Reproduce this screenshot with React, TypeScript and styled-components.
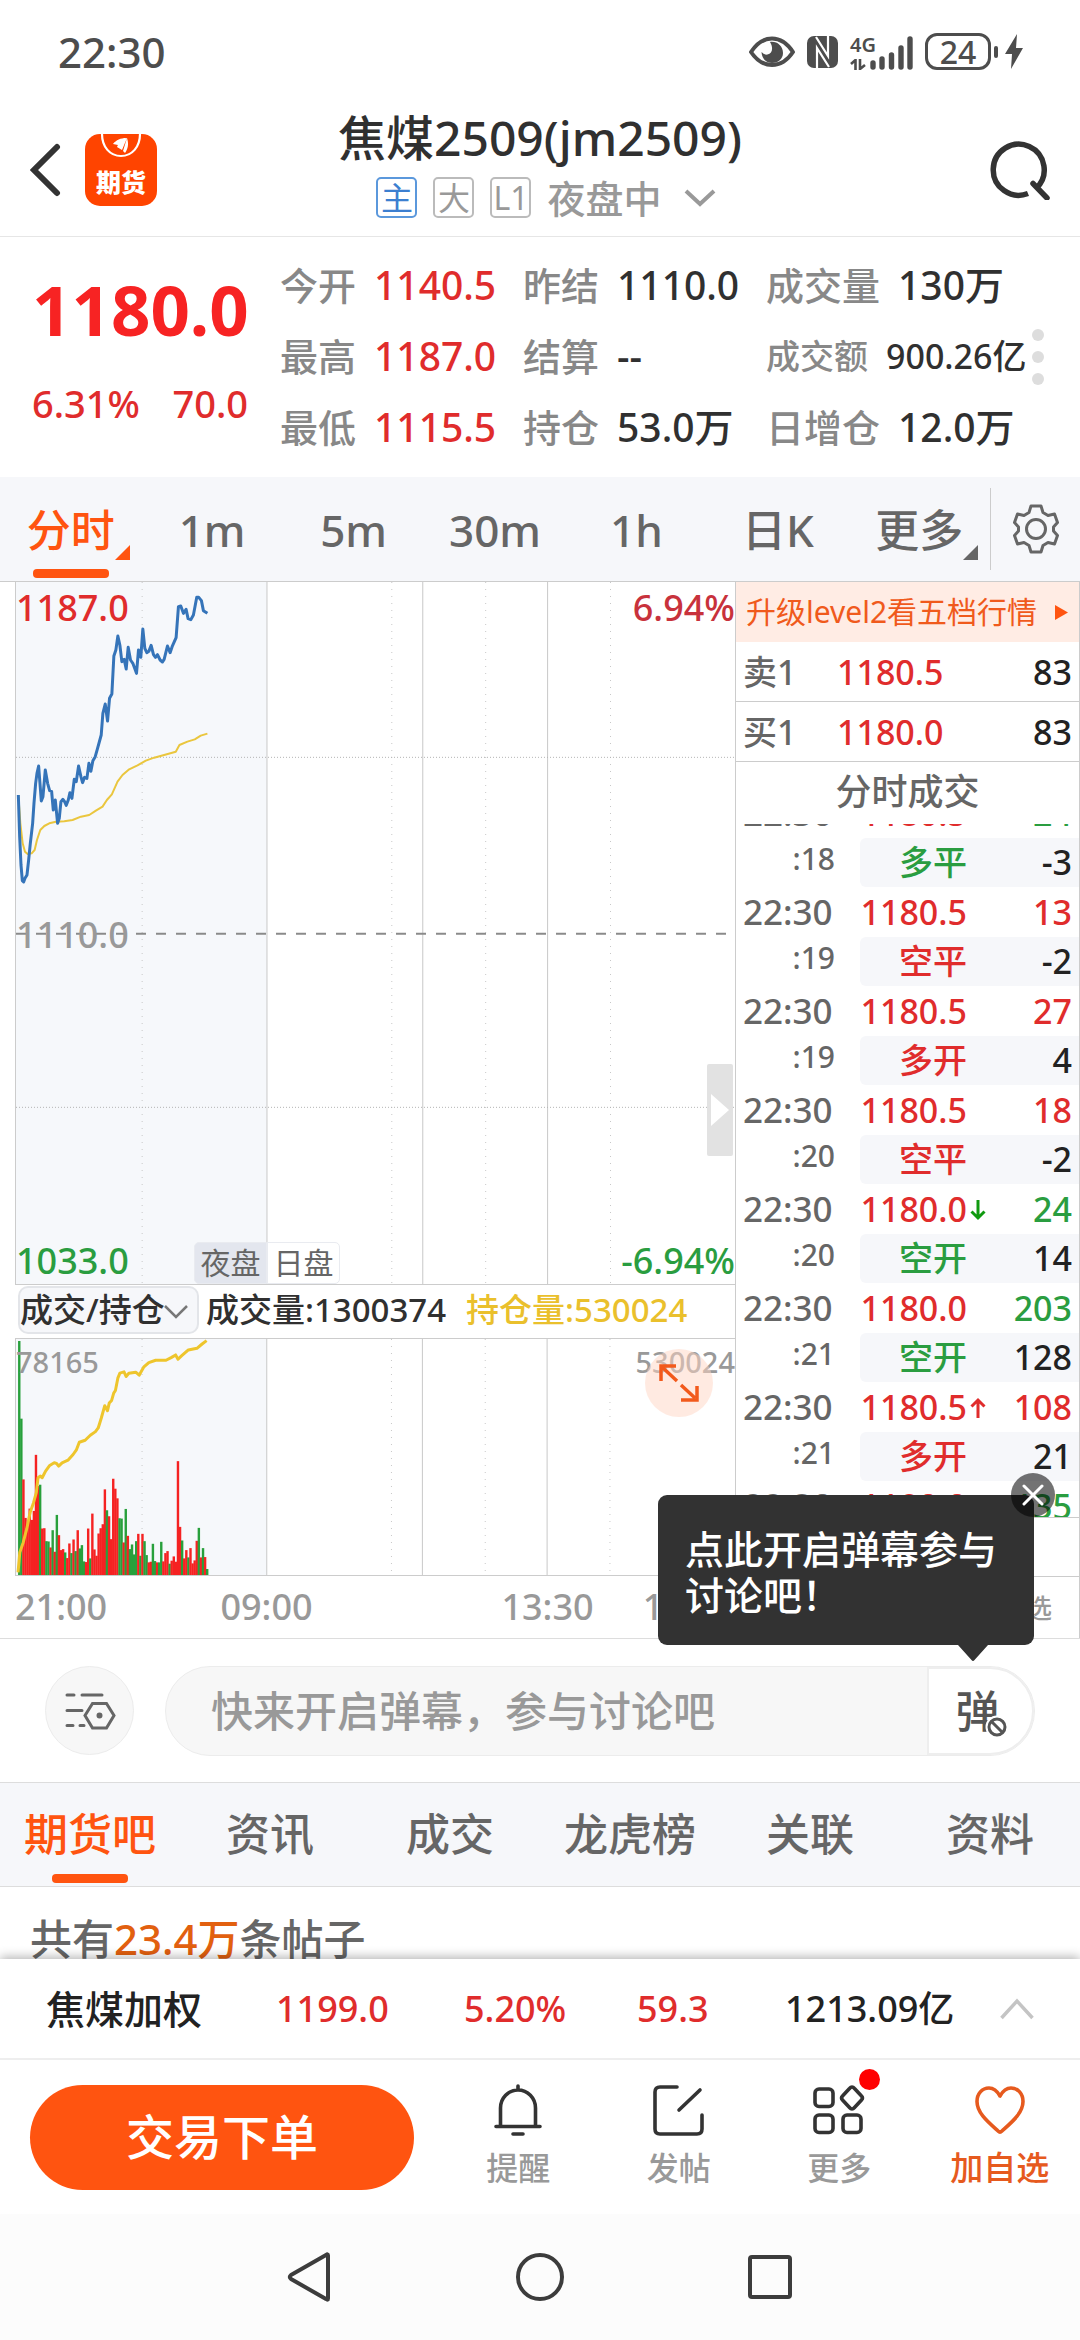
import React from "react";
import styled, { createGlobalStyle } from "styled-components";

const color = {
  ink: "#303030",
  text: "#666666",
  label: "#888888",
  muted: "#999999",
  red: "#e02c2c",
  green: "#2a9d40",
  orange: "#ff5410",
  yellow: "#eac02c",
  blue: "#3574b9",
  line: "#cccccc",
  panel: "#f6f7fa",
};

const Global = createGlobalStyle`
  *, *::before, *::after { box-sizing: border-box; }
  html, body { margin: 0; padding: 0; background: #fff; }
  body { font-family: "Noto Sans", "Noto Sans CJK SC", sans-serif; font-weight: 500; color: ${color.ink}; }
  button, input, select { font: inherit; color: inherit; border: 0; background: none; padding: 0; margin: 0; outline: 0; }
  button { cursor: pointer; }
  svg { display: block; }
  ul, dl, dd, h1, p { margin: 0; padding: 0; font-weight: 500; }
  ul { list-style: none; }
  a { color: inherit; text-decoration: none; }
`;

const Screen = styled.div`
  display: flex;
  flex-direction: column;
  width: 100%;
  height: 100vh;
  min-height: 2200px;
  overflow: hidden;
`;

/* ---------- status bar ---------- */

const StatusBar = styled.div`
  display: flex;
  justify-content: space-between;
  align-items: center;
  height: 103px;
  padding: 0 57px 0 58px;
  color: #4d4d4d;
`;

const Clock = styled.time`
  font-size: 42px;
  line-height: 50px;
`;

const StatusIcons = styled.div`
  display: flex;
  align-items: center;
  gap: 12px;
`;

const Signal = styled.div`
  display: flex;
  align-items: flex-end;
  gap: 4px;
  height: 36px;
`;

const Network = styled.div`
  display: flex;
  flex-direction: column;
  align-items: flex-start;
  justify-content: space-between;
  height: 36px;
  font-size: 20px;
  line-height: 22px;
  font-weight: 600;
`;

const SignalBars = styled.svg`
  margin-left: -10px;
`;

const Battery = styled.div`
  display: flex;
  align-items: center;
  gap: 3px;
`;

const BatteryBody = styled.span`
  width: 66px;
  height: 37px;
  border: 3px solid currentColor;
  border-radius: 12px;
  font-size: 32px;
  line-height: 31px;
  font-weight: 500;
  text-align: center;
`;

const BatteryTip = styled.span`
  width: 4px;
  height: 12px;
  margin-right: 4px;
  border-radius: 2px;
  background: currentColor;
`;

/* ---------- header ---------- */

const Header = styled.header`
  display: grid;
  grid-template-columns: 1fr auto 1fr;
  align-items: center;
  height: 134px;
  border-bottom: 1px solid #e6e6e6;
`;

const HeaderSide = styled.div<{ $end?: boolean }>`
  display: flex;
  align-items: center;
  justify-content: ${(p) => (p.$end ? "flex-end" : "flex-start")};
  gap: 24px;
  padding: 0 30px;
`;

const AppBadge = styled.a`
  position: relative;
  display: flex;
  align-items: flex-end;
  justify-content: center;
  width: 72px;
  height: 72px;
  padding-bottom: 8px;
  border-radius: 15px;
  overflow: hidden;
  background: #ff4400;
  color: #fff;
  font-size: 25px;
  line-height: 32px;
  font-weight: 800;
`;

const BadgeArt = styled.svg`
  position: absolute;
  top: 0;
  left: 15px;
`;

const TitleBlock = styled.div`
  display: flex;
  flex-direction: column;
  align-items: center;
  gap: 10px;
  padding-bottom: 12px;
`;

const Title = styled.h1`
  font-size: 48px;
  line-height: 58px;
  color: #303030;
`;

const TitleMeta = styled.button`
  display: flex;
  align-items: center;
  gap: 16px;
  padding-left: 12px;
  color: ${color.muted};
  font-size: 38px;
  line-height: 42px;
`;

const Chip = styled.span<{ $active?: boolean }>`
  width: 41px;
  height: 41px;
  border: 2px solid ${(p) => (p.$active ? "#5b98dc" : "#bbbbbb")};
  border-radius: 5px;
  color: ${(p) => (p.$active ? "#3c7fd0" : color.muted)};
  font-size: 32px;
  font-weight: 400;
  line-height: 37px;
  text-align: center;
`;

const MetaChevron = styled.svg`
  margin-left: 6px;
`;

/* ---------- quote ---------- */

const Quote = styled.section`
  position: relative;
  display: flex;
  padding: 12px 0 15px;
`;

const Last = styled.div`
  display: flex;
  flex-direction: column;
  width: 280px;
  padding: 12px 30px 0 32px;
  color: ${color.red};
`;

const LastPrice = styled.strong`
  font-size: 69px;
  line-height: 96px;
  font-weight: 700;
  color: #f72323;
`;

const LastChange = styled.div`
  display: flex;
  justify-content: space-between;
  padding: 22px 2px 0 0;
  font-size: 38px;
  line-height: 48px;
`;

const Stats = styled.dl`
  flex: 1;
  display: grid;
  grid-template-columns: 243fr 243fr 314fr;
  grid-auto-rows: 71px;
`;

const Stat = styled.div<{ $small?: boolean }>`
  display: flex;
  align-items: center;
  gap: 18px;
  font-size: ${(p) => (p.$small ? 34 : 38)}px;
  line-height: 48px;
  white-space: nowrap;
`;

const StatLabel = styled.dt`
  color: ${color.label};
`;

const StatValue = styled.dd<{ $up?: boolean; $small?: boolean }>`
  color: ${(p) => (p.$up ? color.red : color.ink)};
  font-size: ${(p) => (p.$small ? 34 : 39)}px;
`;

const PageDots = styled.div`
  position: absolute;
  top: 92px;
  right: 36px;
  display: flex;
  flex-direction: column;
  gap: 10px;
`;

const PageDot = styled.i`
  width: 12px;
  height: 12px;
  border-radius: 50%;
  background: #dddddd;
`;

/* ---------- period tabs ---------- */

const PeriodBar = styled.nav`
  display: flex;
  align-items: center;
  height: 105px;
  border-bottom: 1px solid ${color.line};
  background: ${color.panel};
`;

const Periods = styled.div`
  flex: 1;
  display: grid;
  grid-template-columns: repeat(7, 1fr);
`;

const Period = styled.button<{ $active?: boolean }>`
  position: relative;
  height: 104px;
  padding-top: 2px;
  color: ${(p) => (p.$active ? color.orange : color.text)};
  font-size: 44px;
  line-height: 102px;
`;

const Corner = styled.svg`
  position: absolute;
  left: calc(50% + 44px);
  top: 68px;
`;

const Underline = styled.i`
  position: absolute;
  left: calc(50% - 38px);
  bottom: 3px;
  width: 76px;
  height: 9px;
  border-radius: 4px;
  background: ${color.orange};
`;

const Settings = styled.button`
  display: flex;
  align-items: center;
  justify-content: center;
  width: 90px;
  height: 82px;
  border-left: 1px solid ${color.line};
  color: ${color.text};
`;

/* ---------- charts ---------- */

const Market = styled.section`
  display: flex;
  border-bottom: 1px solid #dddddd;
`;

const ChartColumn = styled.div`
  flex: 1;
  min-width: 0;
  padding-left: 15px;
`;

const Plot = styled.div<{ $h: number }>`
  position: relative;
  height: ${(p) => p.$h}px;
  border-left: 1px solid ${color.line};
  border-bottom: 1px solid ${color.line};
`;

const PlotSvg = styled.svg`
  width: 100%;
  height: 100%;
`;

const PlotLabel = styled.span<{ $top: number; $right?: boolean; $tone: string; $size?: number }>`
  position: absolute;
  top: ${(p) => p.$top}px;
  ${(p) => (p.$right ? "right: 0;" : "left: 0;")}
  color: ${(p) => p.$tone};
  font-size: ${(p) => p.$size ?? 36}px;
  line-height: 44px;
`;

const Sessions = styled.div`
  position: absolute;
  left: 178px;
  bottom: 0;
  display: flex;
`;

const Session = styled.button<{ $active?: boolean }>`
  width: 73px;
  height: 42px;
  border: 1px solid #e9ebf0;
  border-radius: ${(p) => (p.$active ? "5px 0 0 5px" : "0 5px 5px 0")};
  background: ${(p) => (p.$active ? "#e3e6ee" : "#ffffff")};
  color: ${color.text};
  font-size: 30px;
  font-weight: 400;
  line-height: 38px;
`;

const Handle = styled.button`
  position: absolute;
  right: 2px;
  top: 482px;
  display: flex;
  align-items: center;
  justify-content: center;
  width: 26px;
  height: 92px;
  border-radius: 2px;
  background: #e2e2e2;
`;

const Expand = styled.button`
  position: absolute;
  right: 22px;
  top: 10px;
  display: flex;
  align-items: center;
  justify-content: center;
  width: 68px;
  height: 68px;
  border-radius: 50%;
  background: rgba(255, 214, 196, 0.5);
`;

const IndicatorBar = styled.div`
  display: flex;
  align-items: center;
  height: 54px;
  padding: 0 0 4px 3px;
  border-bottom: 1px solid ${color.line};
  font-size: 33px;
  line-height: 44px;
  white-space: nowrap;
`;

const IndicatorPicker = styled.label`
  position: relative;
  display: flex;
  align-items: center;
  width: 181px;
  height: 48px;
  border: 2px solid #e3e5e9;
  border-radius: 10px;
  background: ${color.panel};
`;

const IndicatorSelect = styled.select`
  appearance: none;
  width: 100%;
  height: 44px;
  font-size: 33px;
  line-height: 44px;
`;

const PickerChevron = styled.svg`
  position: absolute;
  right: 9px;
  top: 16px;
  pointer-events: none;
`;

const Reading = styled.span<{ $tone?: string; $gap: number }>`
  margin-left: ${(p) => p.$gap}px;
  color: ${(p) => p.$tone ?? color.ink};
`;

const Axis = styled.div`
  display: grid;
  grid-template-columns: 161fr 181fr 101fr 179fr 98fr;
  align-items: center;
  height: 62px;
  color: ${color.muted};
  font-size: 36px;
  line-height: 44px;
`;

const Tick = styled.span<{ $col: number; $align: string }>`
  grid-column: ${(p) => p.$col};
  text-align: ${(p) => p.$align};
`;

/* ---------- order book and trades ---------- */

const Book = styled.aside`
  display: flex;
  flex-direction: column;
  width: 345px;
  border-left: 1px solid ${color.line};
  border-right: 1px solid ${color.line};
`;

const Upgrade = styled.a`
  display: flex;
  align-items: center;
  justify-content: space-between;
  height: 60px;
  padding: 0 11px 0 10px;
  background: #ffece4;
  color: #f05a1c;
  font-size: 30px;
  font-weight: 400;
  line-height: 40px;
  white-space: nowrap;
`;

const BookRow = styled.div`
  display: grid;
  grid-template-columns: 94px 1fr auto;
  align-items: center;
  height: 60px;
  padding: 0 7px;
  border-bottom: 1px solid ${color.line};
  color: #222222;
  font-size: 34px;
  line-height: 44px;
`;

const Side = styled.span`
  color: ${color.text};
`;

const BookPrice = styled.span`
  color: ${color.red};
`;

const TradesTitle = styled.p`
  height: 62px;
  color: ${color.text};
  font-size: 36px;
  line-height: 60px;
  text-align: center;
`;

const TradesWindow = styled.div`
  height: 694px;
  overflow: hidden;
  border-bottom: 1px solid ${color.line};
`;

const TradesTable = styled.table`
  width: 100%;
  margin-top: -36px;
  table-layout: fixed;
  border-collapse: separate;
  border-spacing: 0;
  font-size: 34px;
`;

const Cell = styled.td<{ $tone?: string; $h?: number; $fill?: "start" | "end" }>`
  height: ${(p) => p.$h ?? 50}px;
  padding: 0 7px 0 0;
  line-height: ${(p) => p.$h ?? 50}px;
  color: ${(p) => p.$tone ?? "#222222"};
  background: ${(p) => (p.$fill ? color.panel : "transparent")};
  border-radius: ${(p) => (p.$fill === "start" ? "6px 0 0 6px" : "0")};
  text-align: right;
  white-space: nowrap;
`;

const TimeCell = styled(Cell)`
  padding: 0 0 0 7px;
  font-size: 35px;
  text-align: left;
`;

const SecondCell = styled(Cell)`
  padding: 0 25px 7px 0;
  font-size: 30px;
  line-height: 42px;
`;

const PriceCell = styled(Cell)`
  padding: 0 21px 0 0;
`;

const Arrow = styled.svg`
  display: inline-block;
  margin: 0 -19px 0 3px;
  vertical-align: 1px;
`;

const BookFoot = styled.div`
  height: 59px;
  border-bottom: 1px solid ${color.line};
`;

const BookTab = styled.button`
  height: 61px;
  padding-right: 27px;
  color: ${color.muted};
  font-size: 26px;
  line-height: 60px;
  text-align: right;
`;

/* ---------- comment bar ---------- */

const CommentBar = styled.form`
  position: relative;
  display: flex;
  align-items: center;
  gap: 31px;
  height: 143px;
  padding: 0 45px;
`;

const RoundButton = styled.button`
  display: flex;
  align-items: center;
  justify-content: center;
  width: 89px;
  height: 89px;
  border: 1px solid #ececec;
  border-radius: 50%;
  background: #f7f7f7;
`;

const Capsule = styled.div`
  flex: 1;
  display: flex;
  height: 90px;
  border: 1px solid #ececec;
  border-radius: 45px;
  overflow: hidden;
  background: #f7f7f7;
`;

const CommentInput = styled.input`
  flex: 1;
  min-width: 0;
  padding-left: 45px;
  font-size: 42px;
  line-height: 60px;
  &::placeholder { color: ${color.muted}; opacity: 1; }
`;

const DanmuToggle = styled.button`
  position: relative;
  width: 107px;
  padding-right: 6px;
  border: 2px solid #eeeeee;
  border-radius: 0 45px 45px 0;
  background: #fff;
  color: #555555;
  font-size: 44px;
  line-height: 84px;
  font-weight: 500;
`;

const BanMark = styled.svg`
  position: absolute;
  left: 56px;
  top: 46px;
`;

const Tip = styled.div`
  position: absolute;
  right: 46px;
  bottom: calc(100% - 6px);
  z-index: 3;
  width: 376px;
  padding: 31px 27px 27px;
  border-radius: 9px;
  background: #323232;
  color: #fff;
  font-size: 39px;
  line-height: 46px;
`;

const TipPointer = styled.svg`
  position: absolute;
  left: 300px;
  top: 100%;
`;

const TipClose = styled.button`
  position: absolute;
  top: -22px;
  right: -21px;
  display: flex;
  align-items: center;
  justify-content: center;
  width: 44px;
  height: 44px;
  border-radius: 50%;
  background: rgba(0, 0, 0, 0.55);
`;

/* ---------- forum ---------- */

const ForumTabs = styled.nav`
  display: grid;
  grid-template-columns: repeat(6, 1fr);
  height: 105px;
  border-top: 1px solid #dddddd;
  border-bottom: 1px solid #dddddd;
  background: ${color.panel};
`;

const ForumTab = styled.button<{ $active?: boolean }>`
  position: relative;
  color: ${(p) => (p.$active ? color.orange : color.text)};
  font-size: 44px;
  line-height: 103px;
`;

const Posts = styled.main`
  flex: 1;
  min-height: 60px;
  padding: 22px 30px 0;
  overflow: hidden;
  color: ${color.text};
  font-size: 42px;
  line-height: 60px;
  white-space: nowrap;
`;

const Count = styled.span`
  color: #e2600f;
`;

/* ---------- bottom ---------- */

const IndexBar = styled.button`
  position: relative;
  display: grid;
  grid-template-columns: 230fr 188fr 173fr 148fr 215fr 34fr;
  align-items: center;
  height: 101px;
  flex-shrink: 0;
  padding: 0 46px 0 46px;
  border-bottom: 2px solid #eeeeee;
  background: #fff;
  box-shadow: 0 -2px 10px rgba(0, 0, 0, 0.3);
  color: #222222;
  font-size: 36px;
  line-height: 50px;
  text-align: left;
  white-space: nowrap;
`;

const IndexName = styled.span`
  font-size: 39px;
`;

const IndexValue = styled.span`
  color: ${color.red};
`;

const ActionBar = styled.div`
  position: relative;
  display: flex;
  align-items: center;
  height: 154px;
  flex-shrink: 0;
  padding-left: 30px;
  background: #fff;
`;

const TradeButton = styled.button`
  width: 384px;
  height: 105px;
  margin-right: 24px;
  border-radius: 53px;
  background: ${color.orange};
  color: #fff;
  font-size: 48px;
  line-height: 102px;
  font-weight: 500;
`;

const Action = styled.button<{ $hot?: boolean }>`
  position: relative;
  flex: 1;
  display: flex;
  flex-direction: column;
  align-items: center;
  gap: 10px;
  color: ${(p) => (p.$hot ? "#e65a1e" : color.muted)};
  font-size: ${(p) => (p.$hot ? 33 : 32)}px;
  line-height: 44px;
`;

const RedDot = styled.i`
  position: absolute;
  left: calc(50% + 20px);
  top: -15px;
  width: 21px;
  height: 21px;
  border-radius: 50%;
  background: #ff0000;
`;

const SystemNav = styled.nav`
  display: flex;
  align-items: center;
  justify-content: center;
  gap: 182px;
  height: 126px;
  flex-shrink: 0;
  background: #fcfcfc;
`;

/* ---------- data ---------- */

const stats = [
  { label: "今开", value: "1140.5", up: true },
  { label: "昨结", value: "1110.0" },
  { label: "成交量", value: "130万" },
  { label: "最高", value: "1187.0", up: true },
  { label: "结算", value: "--" },
  { label: "成交额", value: "900.26亿", small: true },
  { label: "最低", value: "1115.5", up: true },
  { label: "持仓", value: "53.0万" },
  { label: "日增仓", value: "12.0万" },
];

const periods = ["分时", "1m", "5m", "30m", "1h", "日K", "更多"];
const forumTabs = ["期货吧", "资讯", "成交", "龙虎榜", "关联", "资料"];

type Trade = {
  price: string;
  qty: string;
  up: boolean;
  move?: "up" | "down";
  sec?: string;
  kind?: string;
  kindUp?: boolean;
  delta?: string;
};

const trades: Trade[] = [
  { price: "1180.5", qty: "24", up: false, sec: ":18", kind: "多平", kindUp: false, delta: "-3" },
  { price: "1180.5", qty: "13", up: true, sec: ":19", kind: "空平", kindUp: true, delta: "-2" },
  { price: "1180.5", qty: "27", up: true, sec: ":19", kind: "多开", kindUp: true, delta: "4" },
  { price: "1180.5", qty: "18", up: true, sec: ":20", kind: "空平", kindUp: true, delta: "-2" },
  { price: "1180.0", qty: "24", up: false, move: "down", sec: ":20", kind: "空开", kindUp: false, delta: "14" },
  { price: "1180.0", qty: "203", up: false, sec: ":21", kind: "空开", kindUp: false, delta: "128" },
  { price: "1180.5", qty: "108", up: true, move: "up", sec: ":21", kind: "多开", kindUp: true, delta: "21" },
  { price: "1180.0", qty: "135", up: false, move: "down" },
];

const priceLine =
  "52,675 56,800 60,885 64,932 68,936 72,925 78,915 83,870 88,820 95,760 99,700 104,640 108,610 113,588 117,640 121,693 126,680 133,600 140,640 146,662 152,664 157,720 163,690 170,760 175,745 180,695 186,688 191,695 196,706 202,690 207,668 213,685 220,628 226,635 233,588 240,620 245,638 251,622 258,625 264,580 270,604 276,572 283,560 290,535 301,495 306,430 313,402 320,453 326,385 333,372 339,258 345,240 351,198 357,225 363,275 370,268 376,297 382,232 389,270 396,280 407,310 413,240 420,262 426,177 432,235 438,248 444,244 451,226 458,254 464,262 470,254 478,270 485,276 490,268 500,228 508,248 514,230 526,203 533,110 540,108 548,130 556,118 562,146 570,149 578,135 588,82 594,82 602,92 608,122 620,130";

const averageLine =
  "52,675 58,760 65,820 72,845 80,852 92,850 101,840 108,810 118,780 130,768 145,760 165,755 190,754 215,750 240,740 265,735 285,722 305,710 318,690 333,673 350,635 365,615 385,598 410,586 435,572 460,563 490,555 525,545 536,525 560,515 582,508 600,497 620,491";

const openInterest =
  "50,1030 55,970 65,940 75,900 85,850 95,820 103,790 108,745 115,740 120,745 130,725 142,708 155,700 162,702 168,710 178,700 195,692 210,675 220,660 228,638 245,632 260,617 275,606 283,595 292,565 302,528 310,543 315,520 322,512 328,490 333,482 340,445 346,430 358,426 364,440 372,430 392,427 402,436 415,412 430,398 450,391 480,391 495,383 508,375 515,388 525,378 545,360 570,355 585,342 598,332";

const volumes =
  "g333 g567 r750 r866 r890 r838 r872 r845 r676 r770 g766 r898 r897 g936 g937 r955 g903 r968 g857 r918 r963 r960 g970 r987 r943 g972 r931 g966 r903 g958 g948 g997 r999 r898 g988 r853 r961 r980 r913 r897 r885 r780 g843 r861 r930 r748 r778 r807 g867 g868 r940 g839 r920 g960 g946 g976 g936 r914 g980 r914 g936 g978 r1000 r998 g944 g996 r1000 g1000 g938 r997 r972 r966 g1004 r995 r982 r998 r695 r893 g934 r988 r963 g985 r957 r1003 r994 r935 g896 r985 g957 r984 g1020".split(" ");

const solidX = [251, 407, 532];
const dottedX = [126, 376, 470, 595];

function Verticals({ unitX, originX, top, bottom }: { unitX: number; originX: number; top: number; bottom: number }) {
  return (
    <g stroke="#c8c8c8" strokeWidth="1">
      {solidX.map((x) => (
        <line key={x} x1={originX + x * unitX} x2={originX + x * unitX} y1={top} y2={bottom} vectorEffect="non-scaling-stroke" />
      ))}
      {dottedX.map((x) => (
        <line key={x} x1={originX + x * unitX} x2={originX + x * unitX} y1={top} y2={bottom} strokeDasharray="1 6" vectorEffect="non-scaling-stroke" />
      ))}
    </g>
  );
}

function PriceChart() {
  return (
    <PlotSvg viewBox="45 36 2160 2106" preserveAspectRatio="none" fill="none" role="img" aria-label="分时走势">
      <rect x="45" y="36" width="754" height="2106" fill="#f6f8fb" />
      <Verticals unitX={3} originX={46} top={36} bottom={2142} />
      <g stroke="#b4b4b4" strokeWidth="1" strokeDasharray="1 2">
        <line x1="45" x2="2205" y1="562" y2="562" vectorEffect="non-scaling-stroke" />
        <line x1="45" x2="2205" y1="1612" y2="1612" vectorEffect="non-scaling-stroke" />
      </g>
      <line x1="45" x2="2180" y1="1091" y2="1091" stroke="#8a8a8a" strokeWidth="2" strokeDasharray="10 10" vectorEffect="non-scaling-stroke" />
      <polyline points={averageLine} stroke="#eac63e" strokeWidth="2" strokeLinejoin="round" vectorEffect="non-scaling-stroke" />
      <polyline points={priceLine} stroke={color.blue} strokeWidth="3" strokeLinejoin="round" vectorEffect="non-scaling-stroke" />
    </PlotSvg>
  );
}

function VolumeChart() {
  return (
    <PlotSvg viewBox="44 327 2090 711" preserveAspectRatio="none" fill="none" role="img" aria-label="成交量与持仓量">
      <rect x="44" y="327" width="729" height="711" fill="#f6f8fb" />
      <Verticals unitX={2.9} originX={45} top={327} bottom={1038} />
      {volumes.map((v, i) => {
        const y = Number(v.slice(1));
        return <rect key={i} x={50 + i * 6.07} y={y} width="7" height={1038 - y} fill={v[0] === "g" ? "#28a03c" : "#f52222"} />;
      })}
      <polyline points={openInterest} stroke="#eec52c" strokeWidth="3" strokeLinejoin="round" vectorEffect="non-scaling-stroke" />
    </PlotSvg>
  );
}

function MoveArrow({ dir }: { dir: "up" | "down" }) {
  return (
    <Arrow width="16" height="22" viewBox="0 0 16 22" fill="none" stroke={dir === "up" ? color.red : "#109a10"} strokeWidth="3">
      {dir === "up" ? <path d="M8 21V3M1.500 9.500L8 3l6.500 6.500" /> : <path d="M8 1v18M1.500 12.500L8 19l6.500-6.500" />}
    </Arrow>
  );
}

function TradeRows({ t }: { t: Trade }) {
  return (
    <>
      <tr>
        <TimeCell $tone={color.text}>22:30</TimeCell>
        <PriceCell $tone={color.red}>
          {t.price}
          {t.move && <MoveArrow dir={t.move} />}
        </PriceCell>
        <Cell $tone={t.up ? color.red : color.green}>{t.qty}</Cell>
      </tr>
      {t.kind && (
        <tr>
          <SecondCell $tone={color.text} $h={49}>{t.sec}</SecondCell>
          <PriceCell $h={49} $fill="start" $tone={t.kindUp ? color.red : color.green}>{t.kind}</PriceCell>
          <Cell $h={49} $fill="end">{t.delta}</Cell>
        </tr>
      )}
    </>
  );
}

export default function App() {
  return (
    <Screen>
      <Global />
      <StatusBar>
        <Clock>22:30</Clock>
        <StatusIcons>
          <svg width="46" height="32" viewBox="0 0 46 32" fill="none">
            <path d="M2 16C8 7 15 2.500 23 2.500S38 7 44 16C38 25 31 29 23 29S8 25 2 16Z" stroke="#4d4d4d" strokeWidth="4" strokeLinejoin="round" />
            <path d="M21 6c7-1 13 4 13 11 0 6-5 10-11 10-6 0-10-4-10.500-11 2 2 4 3 6 2.500 5-1 6-7 2.500-12.500Z" fill="#4d4d4d" />
          </svg>
          <svg width="31" height="32" viewBox="0 0 31 32">
            <rect width="31" height="32" rx="7" fill="#4d4d4d" />
            <path d="M10 32V12L22 31M21 0V20L9 1" fill="none" stroke="#fff" strokeWidth="2.200" />
          </svg>
          <Signal>
            <Network>
              4G
              <svg width="16" height="11" viewBox="0 0 16 11" fill="none" stroke="#4d4d4d" strokeWidth="2.600">
                <path d="M5.500 11V1L1 5M10 0v10l5-4" />
              </svg>
            </Network>
            <SignalBars width="43" height="34" viewBox="0 0 43 34" stroke="#4d4d4d" strokeWidth="5.400" strokeLinecap="round">
              <path d="M3 27v4M12 23v8M21.500 19v12M31 12v19M40 3v28" />
            </SignalBars>
          </Signal>
          <Battery>
            <BatteryBody>24</BatteryBody>
            <BatteryTip />
            <svg width="18" height="35" viewBox="0 0 18 35" fill="#4d4d4d">
              <path d="M12 0L0 20h7L6 35 18 14h-7Z" />
            </svg>
          </Battery>
        </StatusIcons>
      </StatusBar>

      <Header>
        <HeaderSide>
          <button aria-label="返回">
            <svg width="31" height="54" viewBox="0 0 31 54" fill="none" stroke="#333" strokeWidth="6" strokeLinecap="round">
              <path d="M27 4L4 27 27 50" />
            </svg>
          </button>
          <AppBadge href="#">
            <BadgeArt width="42" height="26" viewBox="0 0 42 26" fill="none">
              <path d="M2 0c0 13 8 22 19 22S40 13 40 0" stroke="#fff" strokeWidth="2.200" />
              <path d="M13 10c3-4 8-6 13-6l-8 7M17 13c2-5 6-8 10-9l-5 12M23 17l4-13c2 6 1 11-2 15Z" fill="#fff" />
            </BadgeArt>
            期货
          </AppBadge>
        </HeaderSide>
        <TitleBlock>
          <Title>焦煤2509(jm2509)</Title>
          <TitleMeta>
            <Chip $active>主</Chip>
            <Chip>大</Chip>
            <Chip>L1</Chip>
            夜盘中
            <MetaChevron width="32" height="20" viewBox="0 0 32 20" fill="none" stroke="#999" strokeWidth="4">
              <path d="M2 3l14 13L30 3" />
            </MetaChevron>
          </TitleMeta>
        </TitleBlock>
        <HeaderSide $end>
          <button aria-label="搜索">
            <svg width="60" height="60" viewBox="0 0 60 60" fill="none" stroke="#333" strokeWidth="5.500">
              <path d="M38 53.500A25.500 25.500 0 1 1 46 48.500" />
              <path d="M43 43.500L57 58" strokeLinecap="round" />
            </svg>
          </button>
        </HeaderSide>
      </Header>

      <Quote>
        <Last>
          <LastPrice>1180.0</LastPrice>
          <LastChange>
            <span>6.31%</span>
            <span>70.0</span>
          </LastChange>
        </Last>
        <Stats>
          {stats.map((s) => (
            <Stat key={s.label} $small={s.small}>
              <StatLabel>{s.label}</StatLabel>
              <StatValue $up={s.up} $small={s.small}>{s.value}</StatValue>
            </Stat>
          ))}
        </Stats>
        <PageDots>
          <PageDot />
          <PageDot />
          <PageDot />
        </PageDots>
      </Quote>

      <PeriodBar>
        <Periods>
          {periods.map((p, i) => (
            <Period key={p} $active={i === 0}>
              {p}
              {(i === 0 || i === 6) && (
                <Corner width="15" height="15" viewBox="0 0 15 15" fill="currentColor">
                  <path d="M15 0v15H0Z" />
                </Corner>
              )}
              {i === 0 && <Underline />}
            </Period>
          ))}
        </Periods>
        <Settings aria-label="设置">
          <svg width="46" height="50" viewBox="0 0 46 50" fill="none" stroke="currentColor" strokeWidth="3" strokeLinejoin="round">
            <path d="M18 2h10l2 6.500 5 3L41.500 10l3 8.500-4 4.500v4l4 4.500-3 8.500-6.500-1.500-5 3L28 48H18l-2-6.500-5-3L4.500 40l-3-8.500 4-4.500v-4l-4-4.500 3-8.500L11 11.500l5-3Z" />
            <circle cx="23" cy="25" r="9.500" />
          </svg>
        </Settings>
      </PeriodBar>

      <Market>
        <ChartColumn>
          <Plot $h={703}>
            <PriceChart />
            <PlotLabel $top={4} $tone={color.red}>1187.0</PlotLabel>
            <PlotLabel $top={4} $tone="#c8323c" $right>6.94%</PlotLabel>
            <PlotLabel $top={331} $tone={color.muted}>1110.0</PlotLabel>
            <PlotLabel $top={657} $tone={color.green}>1033.0</PlotLabel>
            <PlotLabel $top={657} $tone={color.green} $right>-6.94%</PlotLabel>
            <Sessions>
              <Session $active>夜盘</Session>
              <Session>日盘</Session>
            </Sessions>
            <Handle aria-label="收起盘口">
              <svg width="18" height="32" viewBox="0 0 18 32" fill="#fff">
                <path d="M0 0l18 16L0 32Z" />
              </svg>
            </Handle>
          </Plot>
          <IndicatorBar>
            <IndicatorPicker>
              <IndicatorSelect aria-label="副图指标" defaultValue="vol">
                <option value="vol">成交/持仓</option>
              </IndicatorSelect>
              <PickerChevron width="24" height="16" viewBox="0 0 24 16" fill="none" stroke="#777" strokeWidth="2.500">
                <path d="M1 2l11 11L23 2" />
              </PickerChevron>
            </IndicatorPicker>
            <Reading $gap={7}>成交量:1300374</Reading>
            <Reading $gap={20} $tone={color.yellow}>持仓量:530024</Reading>
          </IndicatorBar>
          <Plot $h={237}>
            <VolumeChart />
            <PlotLabel $top={1} $tone={color.muted} $size={29}>78165</PlotLabel>
            <PlotLabel $top={1} $tone={color.muted} $size={29} $right>530024</PlotLabel>
            <Expand aria-label="全屏">
              <svg width="40" height="38" viewBox="0 0 40 38" fill="none" stroke="#f25a1c" strokeWidth="3.500">
                <path d="M18 17L3 3M2 17V2h15M22 21l14 13M38 22v14H22" />
              </svg>
            </Expand>
          </Plot>
          <Axis>
            <Tick $col={1} $align="left">21:00</Tick>
            <Tick $col={2} $align="center">09:00</Tick>
            <Tick $col={4} $align="center">13:30</Tick>
            <Tick $col={5} $align="right">15:00</Tick>
          </Axis>
        </ChartColumn>

        <Book>
          <Upgrade href="#">
            升级level2看五档行情
            <svg width="13" height="15" viewBox="0 0 13 15" fill={color.orange}>
              <path d="M0 0l13 7.500L0 15Z" />
            </svg>
          </Upgrade>
          <BookRow>
            <Side>卖1</Side>
            <BookPrice>1180.5</BookPrice>
            <span>83</span>
          </BookRow>
          <BookRow>
            <Side>买1</Side>
            <BookPrice>1180.0</BookPrice>
            <span>83</span>
          </BookRow>
          <TradesTitle>分时成交</TradesTitle>
          <TradesWindow>
            <TradesTable>
              <colgroup>
                <col width="124" />
                <col width="128" />
                <col />
              </colgroup>
              <tbody>
                {trades.map((t, i) => (
                  <TradeRows key={i} t={t} />
                ))}
              </tbody>
            </TradesTable>
          </TradesWindow>
          <BookFoot />
          <BookTab>选</BookTab>
        </Book>
      </Market>

      <CommentBar onSubmit={(e) => e.preventDefault()}>
        <RoundButton type="button" aria-label="弹幕设置">
          <svg width="52" height="40" viewBox="0 0 52 40" fill="none" stroke="#666" strokeWidth="3" strokeLinecap="round">
            <path d="M3 4h7M18 4h20M3 19.500h15M3 34.500h6M16 34.500h4" />
            <path d="M28.500 12.500h14L50 24.500 42.500 37h-14L21 24.500Z" />
            <circle cx="35.500" cy="24.500" r="1.500" fill="#666" />
          </svg>
        </RoundButton>
        <Capsule>
          <CommentInput aria-label="弹幕" placeholder="快来开启弹幕，参与讨论吧" />
          <DanmuToggle type="button">
            弹
            <BanMark width="24" height="24" viewBox="0 0 24 24">
              <circle cx="12" cy="12" r="11.500" fill="#fff" />
              <circle cx="12" cy="12" r="8" fill="none" stroke="#555" strokeWidth="3" />
              <path d="M6.500 6.500l11 11" stroke="#555" strokeWidth="3" />
            </BanMark>
          </DanmuToggle>
        </Capsule>
        <Tip role="status">
          点此开启弹幕参与讨论吧！
          <TipPointer width="30" height="17" viewBox="0 0 30 17" fill="#323232">
            <path d="M0 0h30L16.500 15q-1.500 2-3 0Z" />
          </TipPointer>
          <TipClose type="button" aria-label="关闭">
            <svg width="22" height="22" viewBox="0 0 22 22" stroke="#fff" strokeWidth="3" strokeLinecap="round">
              <path d="M2 2l18 18M20 2L2 20" />
            </svg>
          </TipClose>
        </Tip>
      </CommentBar>

      <ForumTabs>
        {forumTabs.map((t, i) => (
          <ForumTab key={t} $active={i === 0}>
            {t}
            {i === 0 && <Underline />}
          </ForumTab>
        ))}
      </ForumTabs>

      <Posts>
        共有<Count>23.4万</Count>条帖子
      </Posts>

      <IndexBar>
        <IndexName>焦煤加权</IndexName>
        <IndexValue>1199.0</IndexValue>
        <IndexValue>5.20%</IndexValue>
        <IndexValue>59.3</IndexValue>
        <span>1213.09亿</span>
        <svg width="34" height="22" viewBox="0 0 34 22" fill="none" stroke="#c4c4c4" strokeWidth="3.500">
          <path d="M1.500 20L17 3l15.500 17" />
        </svg>
      </IndexBar>

      <ActionBar>
        <TradeButton>交易下单</TradeButton>
        <Action>
          <svg width="50" height="52" viewBox="0 0 50 52" fill="none" stroke="#333" strokeWidth="3.600" strokeLinecap="round">
            <path d="M25 2v4M7.500 42V24a17.500 18 0 0 1 35 0v18M3 42.500h44M20 50h10" />
          </svg>
          提醒
        </Action>
        <Action>
          <svg width="52" height="52" viewBox="0 0 52 52" fill="none" stroke="#333" strokeWidth="3.600" strokeLinecap="round">
            <path d="M24 3H7q-5 0-5 5v37q0 5 5 5h37q5 0 5-5V31M47 6L26 26" />
          </svg>
          发帖
        </Action>
        <Action>
          <svg width="52" height="52" viewBox="0 0 52 52" fill="none" stroke="#333" strokeWidth="3.600" strokeLinejoin="round">
            <rect x="2" y="5" width="18" height="17.500" rx="4" />
            <rect x="2" y="31" width="18" height="17.500" rx="4" />
            <rect x="30" y="31" width="18" height="17.500" rx="4" />
            <path d="M36.500 4.500q2.500-3 5 0l7 7.500q2 2 0 4l-7 7.500q-2.500 3-5 0L29.500 16q-2-2 0-4Z" />
          </svg>
          更多
          <RedDot />
        </Action>
        <Action $hot>
          <svg width="52" height="52" viewBox="0 0 52 52" fill="none" stroke="#e65a1e" strokeWidth="3.600" strokeLinejoin="round">
            <path d="M26 12C22 5 18 4 15 4 8 4 3 10 3 17.500 3 29 14 38 24 47q2 2 4 0C38 38 49 29 49 17.500 49 10 44 4 37 4c-3 0-7 1-11 8Z" />
          </svg>
          加自选
        </Action>
      </ActionBar>

      <SystemNav>
        <button aria-label="后退">
          <svg width="48" height="52" viewBox="0 0 48 52" fill="none" stroke="#3c3c3c" strokeWidth="4" strokeLinejoin="round">
            <path d="M42 4.500v43q0 2-2 .5L5 28q-2.500-2 0-4L40 4q2-1.500 2 .5Z" />
          </svg>
        </button>
        <button aria-label="主屏幕">
          <svg width="48" height="52" viewBox="0 0 48 52" fill="none" stroke="#3c3c3c" strokeWidth="4">
            <circle cx="24" cy="26" r="22" />
          </svg>
        </button>
        <button aria-label="最近任务">
          <svg width="48" height="52" viewBox="0 0 48 52" fill="none" stroke="#3c3c3c" strokeWidth="4">
            <rect x="4" y="6" width="40" height="40" rx="2" />
          </svg>
        </button>
      </SystemNav>
    </Screen>
  );
}
